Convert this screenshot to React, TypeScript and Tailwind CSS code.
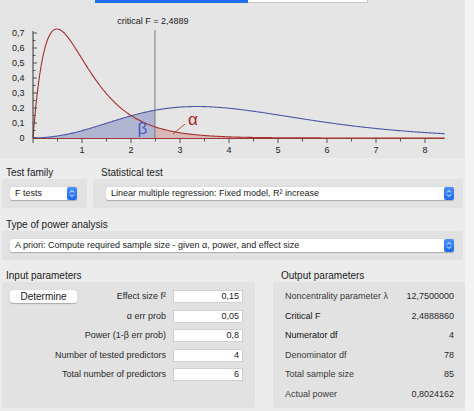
import React from 'react';

const D1 = 4;
const D2 = 78;
const LAMBDA = 12.75;
const CRIT = 2.488886;
const XMAX = 8.4;

const LC = [
  0.99999999999980993, 676.5203681218851, -1259.1392167224028, 771.32342877765313,
  -176.61502916214059, 12.507343278686905, -0.13857109526572012, 9.9843695780195716e-6,
  1.5056327351493116e-7,
];

function lgamma(z: number): number {
  if (z < 0.5) return Math.log(Math.PI / Math.sin(Math.PI * z)) - lgamma(1 - z);
  z -= 1;
  let x = LC[0];
  for (let i = 1; i < 9; i++) x += LC[i] / (z + i);
  const t = z + 7.5;
  return 0.5 * Math.log(2 * Math.PI) + (z + 0.5) * Math.log(t) - t + Math.log(x);
}

const lbeta = (a: number, b: number) => lgamma(a) + lgamma(b) - lgamma(a + b);

// (noncentral) F density
function fdens(x: number, lam: number): number {
  if (x <= 0) return 0;
  const h = lam / 2;
  let s = 0;
  const kmax = lam === 0 ? 1 : 120;
  for (let k = 0; k < kmax; k++) {
    const lw = lam === 0 ? 0 : -h + k * Math.log(h) - lgamma(k + 1);
    const a = D1 / 2 + k;
    const lt =
      lw +
      a * Math.log(D1 / D2) +
      (a - 1) * Math.log(x) -
      ((D1 + D2) / 2 + k) * Math.log(1 + (D1 * x) / D2) -
      lbeta(D2 / 2, a);
    s += Math.exp(lt);
  }
  return s;
}

const X = (f: number) => 33 + 49 * f;
const Y = (d: number) => 135 - 150 * d;

function curve(lam: number, from: number, to: number) {
  const pts: string[] = [];
  const n = Math.max(2, Math.round((to - from) / 0.02));
  for (let i = 0; i <= n; i++) {
    const f = from + ((to - from) * i) / n;
    pts.push(`${X(f).toFixed(2)},${Y(fdens(f, lam)).toFixed(2)}`);
  }
  return pts;
}

const redLine = 'M' + curve(0, 0, XMAX).join(' L');
const blueLine = 'M' + curve(LAMBDA, 0, XMAX).join(' L');
const blueFill =
  `M${X(0)},${Y(0)} L` + curve(LAMBDA, 0, CRIT).join(' L') + ` L${X(CRIT)},${Y(0)} Z`;
const redFill =
  `M${X(CRIT)},${Y(0)} L` + curve(0, CRIT, XMAX).join(' L') + ` L${X(XMAX)},${Y(0)} Z`;

const Chart = () => {
  const yTicks = Array.from({ length: 15 }, (_, i) => i * 0.05);
  const xTicks = Array.from({ length: 17 }, (_, i) => i * 0.5);
  return (
    <svg width="465" height="155" viewBox="0 0 465 155" className="block">
      <path d={blueFill} fill="#5a66b4" fillOpacity="0.38" />
      <path d={redFill} fill="#c05050" fillOpacity="0.3" />
      <line x1={X(CRIT)} y1="27" x2={X(CRIT)} y2="135" stroke="#7a7a7a" strokeWidth="1" />
      <path d={blueLine} fill="none" stroke="#4b58a8" strokeWidth="1.1" />
      <path d={redLine} fill="none" stroke="#a8302c" strokeWidth="1.1" />
      {/* axes */}
      <line x1="33" y1="28" x2="33" y2="135.5" stroke="#333" strokeWidth="1" />
      <line x1="33" y1="135.5" x2={X(XMAX)} y2="135.5" stroke="#9a3a36" strokeWidth="1" />
      {yTicks.map((t, i) => (
        <line key={i} x1="33" y1={Y(t)} x2={i % 2 === 0 ? 37 : 35.5} y2={Y(t)} stroke="#333" strokeWidth="0.8" />
      ))}
      {xTicks.map((t, i) => (
        <line key={i} x1={X(t)} y1="135.5" x2={X(t)} y2={i % 2 === 0 ? 140 : 138.5} stroke="#333" strokeWidth="0.8" />
      ))}
      <g fontFamily="Liberation Sans, Arial, sans-serif" fontSize="9" fill="#222">
        {[0, 1, 2, 3, 4, 5, 6, 7].map((i) => (
          <text key={i} x="24.5" y={Y(i / 10) + 3.2} textAnchor="end">
            {i === 0 ? '0' : `0,${i}`}
          </text>
        ))}
        {[1, 2, 3, 4, 5, 6, 7, 8].map((i) => (
          <text key={i} x={X(i)} y="150" textAnchor="middle">
            {i}
          </text>
        ))}
        <text x="153" y="21" textAnchor="middle">
          critical F = 2,4889
        </text>
      </g>
      <text x="142.5" y="131" textAnchor="middle" fontFamily="Liberation Sans, Arial, sans-serif" fontSize="17" fill="#4b58c0">
        β
      </text>
      <text x="193" y="122" textAnchor="middle" fontFamily="Liberation Sans, Arial, sans-serif" fontSize="17" fill="#b0201c">
        α
      </text>
      <line x1="173" y1="131" x2="185" y2="121" stroke="#b0201c" strokeWidth="0.8" />
    </svg>
  );
};

const Stepper = () => (
  <div className="w-[10px] h-[13px] rounded-[2px] bg-gradient-to-b from-[#4a90f8] to-[#1f68ee] flex items-center justify-center">
    <svg width="6" height="9" viewBox="0 0 6 9">
      <path d="M1 3.5 L3 1.5 L5 3.5 M1 5.5 L3 7.5 L5 5.5" fill="none" stroke="white" strokeWidth="1" />
    </svg>
  </div>
);

const Select = ({ text, className }: { text: string; className: string }) => (
  <div className={`h-[13px] bg-white rounded-[2px] shadow-[0_0.5px_1px_rgba(0,0,0,0.25)] flex items-center justify-between ${className}`}>
    <span className="pl-[5px] text-[9px] leading-none text-[#222] whitespace-nowrap">{text}</span>
    <Stepper />
  </div>
);

const inputs = [
  ['Effect size f²', '0,15'],
  ['α err prob', '0,05'],
  ['Power (1-β err prob)', '0,8'],
  ['Number of tested predictors', '4'],
  ['Total number of predictors', '6'],
];

const outputs = [
  ['Noncentrality parameter λ', '12,7500000', false],
  ['Critical F', '2,4888860', true],
  ['Numerator df', '4', true],
  ['Denominator df', '78', false],
  ['Total sample size', '85', false],
  ['Actual power', '0,8024162', false],
] as const;

export default function App() {
  return (
    <div className="w-[474px] h-[411px] bg-[#ececec] flex overflow-hidden font-['Liberation_Sans',Arial,sans-serif]">
      <div className="w-[465px] flex flex-col">
        <div className="bg-[#e5e5e5] h-[158px] flex flex-col">
          <div className="h-[3px] flex">
            <div className="ml-[95px] w-[153px] bg-[#1e6ff1]" />
            <div className="w-[120px] bg-white border-r border-b border-[#c6c6c6]" />
          </div>
          <Chart />
        </div>

        <div className="flex gap-[6px] px-[2px] mt-[9px]">
          <div className="w-[85px] flex flex-col">
            <div className="pl-[4px] text-[10px] leading-[12px] text-[#222]">Test family</div>
            <div className="h-[29px] bg-[#e2e2e2] rounded-[3px] flex items-center">
              <Select text="F tests" className="ml-[8px] w-[67px]" />
            </div>
          </div>
          <div className="flex-1 flex flex-col">
            <div className="pl-[8px] text-[10px] leading-[12px] text-[#222]">Statistical test</div>
            <div className="h-[29px] bg-[#e2e2e2] rounded-[3px] flex items-center">
              <Select text="Linear multiple regression: Fixed model, R² increase" className="ml-[13px] mr-[9px] flex-1" />
            </div>
          </div>
        </div>

        <div className="px-[2px] mt-[11px] flex flex-col">
          <div className="pl-[4px] text-[10px] leading-[12px] text-[#222]">Type of power analysis</div>
          <div className="h-[29px] bg-[#e2e2e2] rounded-[3px] flex items-center">
            <Select
              text="A priori: Compute required sample size - given α, power, and effect size"
              className="ml-[8px] mr-[9px] flex-1"
            />
          </div>
        </div>

        <div className="flex pl-[2px] mt-[10px] gap-[18px]">
          <div className="w-[253px] flex flex-col">
            <div className="pl-[4px] text-[10px] leading-[12px] text-[#222]">Input parameters</div>
            <div className="h-[126px] bg-[#e2e2e2] rounded-[3px] pt-[8px] pr-[12px] flex flex-col gap-[6.5px]">
              {inputs.map(([label, value], i) => (
                <div key={label} className="h-[13px] flex items-center">
                  {i === 0 && (
                    <div className="ml-[8px] w-[67px] h-[12.5px] bg-white rounded-[3px] shadow-[0_0.5px_1px_rgba(0,0,0,0.25)] flex items-center justify-center text-[10px] leading-none text-[#222]">
                      Determine
                    </div>
                  )}
                  <div className="flex-1 text-right text-[9px] leading-none text-[#2a2a2a] whitespace-nowrap">{label}</div>
                  <div className="ml-[7px] w-[70px] h-[13px] bg-white border border-[#cfcfcf] flex items-center justify-end pr-[3px] text-[9px] leading-none text-[#222]">
                    {value}
                  </div>
                </div>
              ))}
            </div>
          </div>
          <div className="flex-1 flex flex-col">
            <div className="pl-[8px] text-[10px] leading-[12px] text-[#222]">Output parameters</div>
            <div className="h-[126px] bg-[#e2e2e2] rounded-[3px] pt-[8px] pl-[12px] pr-[11px] flex flex-col gap-[6.5px]">
              {outputs.map(([label, value, dark]) => (
                <div key={label} className="h-[13px] flex items-center justify-between text-[9px] leading-none">
                  <span className={dark ? 'text-[#111]' : 'text-[#3a3a3a]'}>{label}</span>
                  <span className="text-[#2a2a2a]">{value}</span>
                </div>
              ))}
            </div>
          </div>
        </div>
      </div>
      <div className="flex-1 bg-[#f3f3f3]" />
    </div>
  );
}
